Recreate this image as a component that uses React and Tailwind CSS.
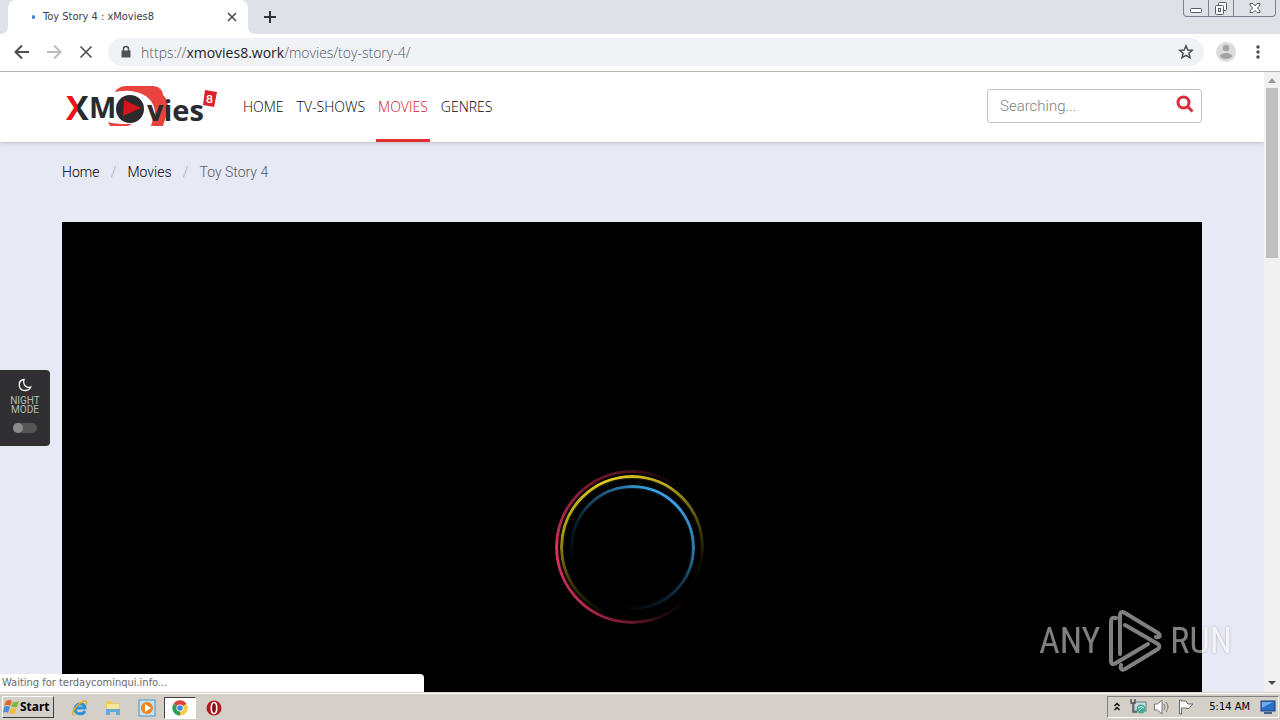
import React, { useState } from 'react';

const NAV_ITEMS = ['HOME', 'TV-SHOWS', 'MOVIES', 'GENRES'];

function Spinner() {
  return (
    <div className="grid place-items-center *:col-start-1 *:row-start-1 *:rounded-full">
      <div className="w-[154px] h-[154px] border-[3px] border-[#e0335f] shadow-[0_0_3px_#8a1f3c,inset_0_0_2px_#8a1f3c] [mask-image:conic-gradient(from_265deg,#000,#0009_45deg,#0006_85deg,#0002_115deg,transparent_140deg,transparent_230deg,#0003_255deg,#0007_275deg,#000c_315deg,#000)]" />
      <div className="w-[144px] h-[144px] border-[3px] border-[#e3cc22] shadow-[0_0_2px_#6b5f10,inset_0_0_2px_#6b5f10] [mask-image:conic-gradient(from_340deg,#000,#000c_50deg,#0005_90deg,#0001_120deg,transparent_145deg,transparent_220deg,#0004_260deg,#000b_300deg,#000)]" />
      <div className="w-[125px] h-[125px] border-[3px] border-[#3a9fe0] shadow-[0_0_3px_#1c527a,inset_0_0_2px_#1c527a] [mask-image:conic-gradient(from_45deg,#000,#000b_50deg,#0005_80deg,#0002_115deg,transparent_145deg,transparent_210deg,#0003_250deg,#0009_290deg,#000_330deg)]" />
    </div>
  );
}

function Logo() {
  return (
    <svg className="w-40 h-12" viewBox="0 0 160 48" aria-label="XMovies8">
      <defs>
        <linearGradient id="logoX" x1="0" y1="0" x2="1" y2="0">
          <stop offset="48%" stopColor="#e8131b" />
          <stop offset="52%" stopColor="#2b2b2e" />
        </linearGradient>
      </defs>
      <path d="M53 10C56 5 60 4 66 4H89C96 4 100 6 101 13C106 17 107 25 105 31L101 44H89L93 30C92 19 84 12 74 10C67 8 60 9 53 10Z" fill="#e9433f" />
      <path d="M46 40C53 42 60 42 70 42L66 44H48Z" fill="#e9433f" />
      <g fontFamily="'Open Sans', sans-serif" fontWeight="700" fill="#2b2b2e">
        <text x="4" y="38" fontSize="34" fill="url(#logoX)">X</text>
        <text x="27" y="36" fontSize="29">M</text>
        <text x="85" y="39" fontSize="29">vies</text>
      </g>
      <circle cx="68" cy="27" r="14" fill="#2b2b2e" />
      <path d="M62 18L79 26L61 34Z" fill="#d3161b" />
      <path d="M143 8L155 10L152 25L141 23Z" fill="#d8232a" />
      <text x="144" y="21" fontFamily="Lato, sans-serif" fontWeight="700" fontSize="12" fill="#fff">8</text>
    </svg>
  );
}

function WindowButtons() {
  return (
    <div className="flex h-[17px] border border-t-0 border-[#7d838e] rounded-b-[4px] divide-x divide-[#7d838e]">
      <button aria-label="Minimize" className="w-[25px] flex items-center justify-center">
        <svg className="w-4 h-4" viewBox="0 0 16 16" fill="#fff" stroke="#555c68">
          <rect x="2.500" y="8.500" width="11" height="4" rx="1" />
        </svg>
      </button>
      <button aria-label="Restore" className="w-[25px] flex items-center justify-center">
        <svg className="w-4 h-4" viewBox="0 0 16 16" fill="#fff" stroke="#555c68">
          <rect x="5.500" y="2.500" width="8" height="8" rx="1" />
          <rect x="2.500" y="5.500" width="8" height="9" rx="1" />
          <rect x="5.500" y="8.500" width="2" height="3" />
        </svg>
      </button>
      <button aria-label="Close window" className="w-[41px] flex items-center justify-center">
        <svg className="w-4 h-4" viewBox="0 0 16 16" fill="#fff" stroke="#555c68">
          <path d="M3 3.500H6L8 6L10 3.500H13V5L10.500 8L13 11V12.500H10L8 10.500L6 12.500H3V11L5.500 8L3 5Z" />
        </svg>
      </button>
    </div>
  );
}

function TabStrip() {
  return (
    <div className="flex h-[34px] pl-2 pr-1 bg-[#dee1e6]">
      <div className="relative flex items-center w-60 pl-6 pr-2 bg-white rounded-t-lg text-[#3c4043]">
        <svg className="absolute bottom-0 -left-2 w-2 h-2" viewBox="0 0 8 8" fill="#fff"><path d="M8 0V8H0Q8 8 8 0Z" /></svg>
        <svg className="absolute bottom-0 -right-2 w-2 h-2" viewBox="0 0 8 8" fill="#fff"><path d="M0 0V8H8Q0 8 0 0Z" /></svg>
        <span className="w-[3px] h-1 mr-2 rounded-full bg-[#3f7fd8]" />
        <span className="flex-1 text-[11px]">Toy Story 4 : xMovies8</span>
        <button aria-label="Close tab" className="w-4 h-4">
          <svg viewBox="0 0 16 16" fill="none" stroke="#4a4d51" strokeWidth="1.700"><path d="M4 4L12 12M12 4L4 12" /></svg>
        </button>
      </div>
      <button aria-label="New tab" className="w-4 ml-[14px]">
        <svg className="w-4 h-4" viewBox="0 0 16 16" fill="none" stroke="#2f3237" strokeWidth="2"><path d="M8 2V14M2 8H14" /></svg>
      </button>
      <div className="flex-1" />
      <WindowButtons />
    </div>
  );
}

function Toolbar() {
  return (
    <div className="flex items-center h-[38px] px-3 pb-px bg-white border-b border-[#b4b4b4]">
      <div className="flex gap-3 pr-3">
        <button aria-label="Back" className="w-5 h-5">
          <svg viewBox="0 0 20 20" fill="none" stroke="#4b4e52" strokeWidth="2"><path d="M17 10H4M10 3.500L3.500 10L10 16.500" /></svg>
        </button>
        <button aria-label="Forward" className="w-5 h-5">
          <svg viewBox="0 0 20 20" fill="none" stroke="#babcbe" strokeWidth="2"><path d="M3 10H16M10 3.500L16.500 10L10 16.500" /></svg>
        </button>
        <button aria-label="Stop" className="w-5 h-5">
          <svg viewBox="0 0 20 20" fill="none" stroke="#4b4e52" strokeWidth="1.600"><path d="M4.500 4.500L15.500 15.500M15.500 4.500L4.500 15.500" /></svg>
        </button>
      </div>
      <div className="flex flex-1 items-center h-7 pl-3 pr-[10px] rounded-full bg-[#f0f2f5]">
        <svg className="w-3 h-[14px] mr-[9px]" viewBox="0 0 12 14" fill="#4f5256">
          <path d="M1.500 5.500H10.500V12.500H1.500Z" />
          <path d="M3.500 6V4A2.500 2.500 0 0 1 8.500 4V6" fill="none" stroke="#4f5256" strokeWidth="1.500" />
        </svg>
        <span className="flex-1 font-['Open_Sans'] font-light text-[14px] text-[#55595d]">
          https://<span className="font-normal text-[#202124]">xmovies8.work</span>/movies/toy-story-4/
        </span>
        <button aria-label="Bookmark this page" className="w-4 h-4">
          <svg viewBox="0 0 16 16" fill="none" stroke="#4b4e52" strokeWidth="1.500"><path d="M8 1.800L9.800 6L14.300 6.300L10.900 9.300L12 13.800L8 11.400L4 13.800L5.100 9.300L1.700 6.300L6.200 6Z" /></svg>
        </button>
      </div>
      <button aria-label="Profile" className="w-5 h-5 ml-3 mr-3">
        <svg viewBox="0 0 20 20">
          <circle cx="10" cy="10" r="10" fill="#dcdcdd" />
          <circle cx="10" cy="6" r="3.200" fill="#a3a4a6" />
          <ellipse cx="10" cy="14" rx="6" ry="3" fill="#a3a4a6" />
        </svg>
      </button>
      <button aria-label="Menu" className="w-5 h-5">
        <svg viewBox="0 0 20 20" fill="#4b4e52"><circle cx="10" cy="5" r="1.700" /><circle cx="10" cy="10" r="1.700" /><circle cx="10" cy="15" r="1.700" /></svg>
      </button>
    </div>
  );
}

function SiteHeader() {
  const [query, setQuery] = useState('');

  return (
    <header className="relative bg-white shadow-[0_1px_4px_rgba(0,0,0,0.2)]">
      <div className="flex max-w-[1140px] h-[70px] mx-auto">
        <a href="#home" className="pt-[10px] mr-[19px]">
          <Logo />
        </a>
        <nav className="flex gap-[9px] font-['Open_Sans'] font-light text-[14px]">
          {NAV_ITEMS.map((item) => (
            <a
              key={item}
              href="#nav"
              className={
                item === 'MOVIES'
                  ? 'flex items-center px-[2px] pt-px border-b-[3px] border-[#e52d2f] text-[#d00f24]'
                  : 'flex items-center px-[2px] pt-px border-b-[3px] border-transparent text-black'
              }
            >
              {item}
            </a>
          ))}
        </nav>
        <form className="flex items-center w-[215px] h-[34px] mt-[17px] ml-auto pl-3 pr-[7px] border border-[#c4c4c4] rounded-[3px]">
          <input
            type="text"
            aria-label="Search"
            placeholder="Searching..."
            value={query}
            onChange={(e) => setQuery(e.target.value)}
            className="flex-1 min-w-0 font-['Roboto'] font-light text-[15px] outline-none placeholder:text-[#808080]"
          />
          <button type="button" aria-label="Submit search" className="w-[18px] h-[18px] mb-1">
            <svg viewBox="0 0 18 18" fill="none" stroke="#dc2c3c" strokeWidth="3"><circle cx="7.500" cy="7.500" r="5.500" /><path d="M11.500 11.500L16.500 16.500" /></svg>
          </button>
        </form>
      </div>
    </header>
  );
}

function NightMode() {
  const [night, setNight] = useState(false);

  return (
    <label className="absolute left-0 top-[298px] flex flex-col items-center w-[50px] h-[76px] pt-2 rounded-r-[4px] bg-[#303032] text-[#b9b9b9]">
      <svg className="w-[14px] h-[14px]" viewBox="0 0 14 14" fill="none" stroke="#fff" strokeWidth="1.300"><path d="M6 1.500C2.500 2 1 4.500 1.300 7.500C1.700 11 4.500 12.700 7.500 12.500C10 12.300 12 11 12.700 9C9 10.500 4.500 7.500 6 1.500Z" /></svg>
      <span className="mt-1 font-['Roboto'] text-[10px] leading-[9px] text-center">NIGHT<br />MODE</span>
      <input type="checkbox" className="sr-only" checked={night} onChange={() => setNight(!night)} />
      <span className="w-6 h-[10px] mt-[9px] rounded-full bg-[#555]">
        <span className="block w-[10px] h-[10px] rounded-full bg-[#8b8b8b]" />
      </span>
    </label>
  );
}

function Page() {
  return (
    <div className="relative flex-1 overflow-hidden bg-[#e7eaf4]">
      <SiteHeader />
      <main className="max-w-[1140px] mx-auto">
        <div className="flex items-center h-[60px] mb-5 font-['Roboto'] font-light text-[14px]">
          <a href="#home" className="text-black">Home</a>
          <span className="w-7 text-center text-[#a9acb5]">/</span>
          <a href="#movies" className="text-black">Movies</a>
          <span className="w-7 text-center text-[#a9acb5]">/</span>
          <span className="text-[#555861]">Toy Story 4</span>
        </div>
        <div className="flex items-center justify-center h-[650px] bg-black">
          <Spinner />
        </div>
      </main>
      <NightMode />
      <div className="absolute left-0 bottom-0 w-[424px] h-[18px] pl-[2px] rounded-tr-[4px] bg-white text-[11px] leading-[18px] text-[#6a6a6a]">
        Waiting for terdaycominqui.info...
      </div>
    </div>
  );
}

function Scrollbar() {
  return (
    <div className="flex flex-col items-center justify-between w-4 bg-[#f1f1f1]">
      <div className="flex flex-col items-center">
        <svg className="w-4 h-4" viewBox="0 0 16 16" fill="#9c9c9c"><path d="M4 11L8 6L12 11Z" /></svg>
        <div className="w-3 h-[170px] bg-[#bfbfbf]" />
      </div>
      <svg className="w-4 h-[18px]" viewBox="0 0 16 18" fill="#4d4d4d"><path d="M4 7L8 11L12 7Z" /></svg>
    </div>
  );
}

function Watermark() {
  return (
    <div className="absolute right-12 bottom-12 flex items-center gap-2 font-['Roboto_Condensed','Liberation_Sans_Narrow','Roboto'] text-[36px] text-white opacity-50 drop-shadow-[0_0_1px_rgba(0,0,0,0.5)] pointer-events-none">
      <span>ANY</span>
      <svg className="w-[54px] h-[62px]" viewBox="0 0 54 62" fill="none" stroke="#fff" strokeWidth="4" strokeLinejoin="round" strokeLinecap="round">
        <path d="M8 8C4 7 3 9 3 12V51C3 54 5 55 8 53L40 34" />
        <path d="M12 44V6C12 2 14 1 17 3L50 23C53 25 52 28 48 27" />
        <path d="M17 15L50 34C52 36 52 37 50 39L17 59C13 61 12 58 13 55" />
      </svg>
      <span>RUN</span>
    </div>
  );
}

function StartFlag() {
  return (
    <svg className="w-4 h-4" viewBox="0 0 16 16">
      <path d="M3 2Q6 0 9 2L7 7Q4 5 1 7Z" fill="#e8632c" />
      <path d="M10 3Q13 4 16 2L14 8Q11 9 8 7Z" fill="#7db53c" />
      <path d="M1 8Q4 6 7 8L5 14Q3 12 0 14Z" fill="#4b8fd6" />
      <path d="M8 9Q11 10 14 9L12 14Q9 16 6 14Z" fill="#f5bd32" />
    </svg>
  );
}

function Taskbar() {
  return (
    <footer className="flex h-7 pt-[3px] pb-px pl-[2px] pr-px border-t border-[#d4d0c8] bg-[#d4d0c8] shadow-[inset_0_1px_0_#fff]">
      <button className="flex items-center gap-px w-[52px] h-[22px] border border-t-white border-l-white border-r-[#404040] border-b-[#404040] font-['Noto_Sans'] font-bold text-[12px] text-black">
        <StartFlag />
        Start
      </button>
      <div className="flex items-center ml-[10px]">
        <button aria-label="Internet Explorer" className="flex justify-center w-[31px]">
          <svg className="w-[18px] h-[18px]" viewBox="0 0 18 18" fill="none">
            <path d="M14 12C12 16 4 16 4 10C4 4 14 3 14 9H5" stroke="#2f93d8" strokeWidth="3" />
            <path d="M3 16C-1 15 5 6 11 3C15 1 17 2 15 6" stroke="#e3ae28" strokeWidth="1.500" />
          </svg>
        </button>
        <button aria-label="File Explorer" className="flex justify-center w-[35px]">
          <svg className="w-[18px] h-[18px]" viewBox="0 0 18 18">
            <path d="M2 2H7L8 4H15V11H2Z" fill="#ecc95c" />
            <path d="M3 5H15V13H3Z" fill="#f8e49a" />
            <path d="M2 10H16V16H12V13H6V16H2Z" fill="#65add8" />
          </svg>
        </button>
        <button aria-label="Media Player" className="flex justify-center w-[34px]">
          <svg className="w-[18px] h-[18px]" viewBox="0 0 18 18">
            <rect x="1" y="1" width="16" height="16" fill="#c7e2f3" stroke="#4f91c5" />
            <circle cx="9" cy="9" r="6" fill="#ed861c" />
            <path d="M7 5L13 9L7 13Z" fill="#fff" />
          </svg>
        </button>
        <button aria-label="Chrome" className="flex items-center justify-center w-8 h-[22px] border border-t-[#404040] border-l-[#404040] border-r-white border-b-white bg-white">
          <svg className="w-4 h-4" viewBox="0 0 16 16">
            <path d="M8 8L1.500 4A7.500 7.500 0 0 1 14.500 4Z" fill="#dc4437" />
            <path d="M8 8L1.500 4A7.500 7.500 0 0 0 8 15.500Z" fill="#2f9e57" />
            <path d="M8 8L14.500 4A7.500 7.500 0 0 1 8 15.500Z" fill="#f7cc42" />
            <circle cx="8" cy="8" r="3.600" fill="#fff" />
            <circle cx="8" cy="8" r="2.800" fill="#4385ea" />
          </svg>
        </button>
        <button aria-label="Opera" className="flex justify-center w-[35px]">
          <svg className="w-4 h-4" viewBox="0 0 16 16">
            <circle cx="8" cy="8" r="7.500" fill="#b3191f" />
            <ellipse cx="8" cy="8" rx="2.700" ry="5.500" fill="#7e0e13" stroke="#fff" strokeWidth="1.600" />
          </svg>
        </button>
      </div>
      <div className="flex items-center h-[22px] ml-auto pl-1 border border-t-[#808080] border-l-[#808080] border-r-white border-b-white">
        <button aria-label="Show hidden icons" className="w-3 h-4">
          <svg viewBox="0 0 12 16" fill="none" stroke="#111" strokeWidth="1.500"><path d="M2.500 7L5 4.500L7.500 7M2.500 11L5 8.500L7.500 11" /></svg>
        </button>
        <svg className="w-[18px] h-[18px] ml-[5px]" viewBox="0 0 18 18">
          <rect x="5" y="4" width="12" height="9" fill="#c9ddd8" stroke="#5d7f86" />
          <path d="M2 1V5H6V1M4 5V14H8" fill="none" stroke="#555" strokeWidth="1.500" />
          <circle cx="12" cy="11" r="4.500" fill="#48a898" />
          <path d="M9 10Q12 7 15 10M10 13L13 10" fill="none" stroke="#d6f0ea" />
        </svg>
        <svg className="w-[18px] h-[18px] ml-[6px]" viewBox="0 0 18 18" fill="#fff" stroke="#777">
          <path d="M1.500 6H4.500L9 2V16L4.500 12H1.500Z" />
          <path d="M11 6Q13 9 11 12M13 4Q17 9 13 14" fill="none" />
        </svg>
        <svg className="w-[18px] h-[18px] ml-[6px]" viewBox="0 0 18 18" fill="#fff" stroke="#666">
          <path d="M2.500 2V16H4.500V10H10L11 11L16 6H11L9 3H4.500V2Z" />
        </svg>
        <span className="ml-[14px] text-[11px] text-black">5:14 AM</span>
        <svg className="w-4 h-4 ml-[10px] mr-[2px]" viewBox="0 0 16 16">
          <rect x="1" y="2" width="14" height="10" fill="#2a6fca" stroke="#1e437d" />
          <path d="M2 3H13L2 9Z" fill="#71adec" />
          <path d="M4 14H12" stroke="#44618c" strokeWidth="2" />
        </svg>
      </div>
    </footer>
  );
}

function App() {
  return (
    <div className="relative flex flex-col h-screen overflow-hidden font-['DejaVu_Sans_Condensed','Noto_Sans',sans-serif]">
      <TabStrip />
      <Toolbar />
      <div className="flex flex-1 min-h-0">
        <Page />
        <Scrollbar />
      </div>
      <Taskbar />
      <Watermark />
    </div>
  );
}

export default App;
